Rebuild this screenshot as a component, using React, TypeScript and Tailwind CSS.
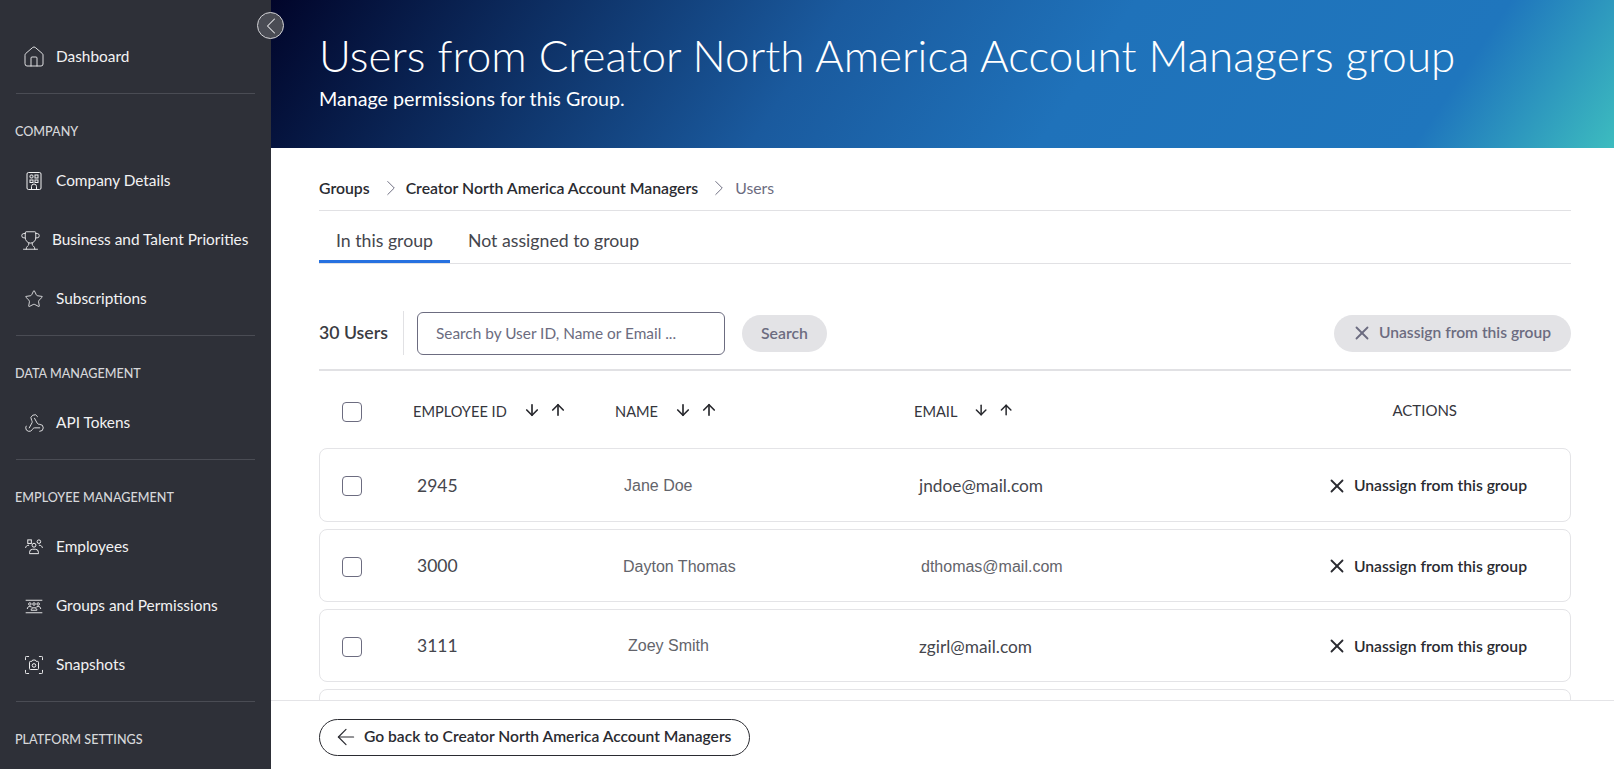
import { ArrowDown, ArrowLeft, ArrowUp, ChevronLeft, ChevronRight, House, Star, Trophy, Webhook, X } from "lucide-react";
import type { ReactNode } from "react";

const BuildingIcon = () => (
  <svg width="18" height="20" viewBox="0 0 18 20" fill="none" stroke="currentColor" strokeWidth="1">
    <rect x="2" y="1.5" width="14" height="17" rx="1.5" />
    <rect x="5" y="4" width="3" height="3" rx="1" />
    <rect x="10" y="4" width="3" height="3" />
    <rect x="5" y="9" width="3" height="2.5" />
    <rect x="10" y="9" width="3" height="2.5" />
    <path d="M6.5 18.5v-3a2.5 2.5 0 0 1 5 0v3" />
  </svg>
);

const EmployeesIcon = () => (
  <svg width="18" height="16" viewBox="0 0 20 18" fill="none" stroke="currentColor" strokeWidth="1.1">
    <rect x="3" y="1" width="4" height="4" />
    <circle cx="15.5" cy="3" r="2" />
    <circle cx="10" cy="7" r="2.2" />
    <path d="M5 16.5v-1.5a3.5 3.5 0 0 1 3.5-3.5h3a3.5 3.5 0 0 1 3.5 3.5v1.5z" />
    <path d="M.5 10c.5-2 1.500-3 4-3M19.500 10c-.5-2-1.500-3-4-3" />
  </svg>
);

const GroupsIcon = () => (
  <svg width="18" height="15" viewBox="0 0 20 18" fill="none" stroke="currentColor" strokeWidth="1.1">
    <path d="M0 1.500h20M0 16.500h20" />
    <circle cx="5" cy="6" r="1.500" />
    <circle cx="10" cy="6" r="1.500" />
    <circle cx="15" cy="6" r="1.500" />
    <path d="M2 12c0-2 1-3 3-3 1.500 0 2.500 .5 3 1.500M18 12c0-2-1-3-3-3-1.500 0-2.500 .5-3 1.500M6.500 13.500c0-2 1.500-3 3.500-3s3.500 1 3.500 3z" />
  </svg>
);

const SnapshotsIcon = () => (
  <svg width="18" height="18" viewBox="0 0 20 20" fill="none" stroke="currentColor" strokeWidth="1.1">
    <path d="M.5 4.500v-3a1 1 0 0 1 1-1h3M15.500 .5h3a1 1 0 0 1 1 1v3M19.500 15.500v3a1 1 0 0 1-1 1h-3M4.500 19.500h-3a1 1 0 0 1-1-1v-3" />
    <path d="M5 7a1 1 0 0 1 1-1h1.500l1-1.500h3l1 1.500H14a1 1 0 0 1 1 1v7a1 1 0 0 1-1 1H6a1 1 0 0 1-1-1z" />
    <circle cx="10" cy="10.500" r="2" />
  </svg>
);

function NavItem({ icon, label, wide }: { icon: ReactNode; label: string; wide?: boolean }) {
  return (
    <div className={`flex h-[59px] items-center pb-px text-[15.4px] text-[#f2f2f3] ${wide ? "pl-[20px]" : "pl-[24px]"}`}>
      <span className="mr-[12px] flex h-5 w-5 shrink-0 items-center justify-center">{icon}</span>
      <span className="whitespace-nowrap">{label}</span>
    </div>
  );
}

function SectionTitle({ children }: { children: ReactNode }) {
  return <div className="h-[58px] pl-[15px] pt-[31px] text-[12.6px] leading-[13px] font-medium text-[#d6d7da]">{children}</div>;
}

const Divider = () => <div className="mx-4 mt-[6px] h-px bg-[#4a4c54]" />;

function SortHeader({ label, className }: { label: string; className: string }) {
  return (
    <div className={`flex items-center ${className}`}>
      <span className="text-[14.6px] leading-none text-[#35363d] uppercase">{label}</span>
      <ArrowDown size={18} strokeWidth={2.2} className="-mt-1 ml-[16px] text-[#26272c]" />
      <ArrowUp size={18} strokeWidth={2.2} className="-mt-1 ml-[8px] text-[#26272c]" />
    </div>
  );
}

const Checkbox = () => <span className="block h-5 w-5 rounded-[4px] border border-[#6c6c80] bg-white" />;

const rows = [
  { id: "2945", name: "Jane Doe", email: "jndoe@mail.com", heightCls: "h-[74px]", nameCls: "", emailCls: "text-[#45464d] [font-family:Lato,sans-serif] text-[17.3px]" },
  { id: "3000", name: "Dayton Thomas", email: "dthomas@mail.com", heightCls: "h-[73px]", nameCls: "-ml-px", emailCls: "ml-[2px] text-[#63646b] [font-family:'Liberation_Sans',sans-serif] text-[16px]" },
  { id: "3111", name: "Zoey Smith", email: "zgirl@mail.com", heightCls: "h-[73px]", nameCls: "ml-1 -mt-px", emailCls: "text-[#45464d] [font-family:Lato,sans-serif] text-[17.3px]" },
];

export default function App() {
  return (
    <div className="relative flex h-screen overflow-hidden bg-white [font-family:Lato,'Open_Sans',sans-serif]">
      {/* SIDEBAR */}
      <aside className="h-full w-[271px] shrink-0 overflow-hidden bg-[#2e3038] pt-[28px]">
        <NavItem icon={<House size={24} strokeWidth={0.9} className="shrink-0" />} label="Dashboard" />
        <Divider />
        <SectionTitle>COMPANY</SectionTitle>
        <NavItem icon={<BuildingIcon />} label="Company Details" />
        <NavItem icon={<Trophy size={21} strokeWidth={1} className="shrink-0" />} label="Business and Talent Priorities" wide />
        <NavItem icon={<Star size={20} strokeWidth={1} className="shrink-0" />} label="Subscriptions" />
        <Divider />
        <SectionTitle>DATA MANAGEMENT</SectionTitle>
        <NavItem icon={<Webhook size={21} strokeWidth={1} className="shrink-0" />} label="API Tokens" />
        <Divider />
        <SectionTitle>EMPLOYEE MANAGEMENT</SectionTitle>
        <NavItem icon={<EmployeesIcon />} label="Employees" />
        <NavItem icon={<GroupsIcon />} label="Groups and Permissions" />
        <NavItem icon={<SnapshotsIcon />} label="Snapshots" />
        <Divider />
        <SectionTitle>PLATFORM SETTINGS</SectionTitle>
      </aside>

      {/* collapse button sits over the sidebar edge */}
      <button className="absolute left-[257px] top-[12px] z-10 flex h-[27px] w-[27px] items-center justify-center rounded-full border border-[#d4d4d8] bg-[#4a4c54] text-[#e8e8ea]">
        <ChevronLeft size={28} strokeWidth={0.9} className="shrink-0" />
      </button>

      <div className="flex min-w-0 flex-1 flex-col">
        {/* HEADER */}
        <header className="h-[148px] shrink-0 bg-[linear-gradient(124deg,#01052a_0%,#1a5a9e_40%,#1f72ba_60%,#1f76bd_86%,#3dbcbf_100%)] pl-[48px] pt-[30px] text-white">
          <h1 className="text-[44px] leading-[50px] font-light whitespace-nowrap">Users from Creator North America Account Managers group</h1>
          <p className="mt-[7px] text-[19.7px] leading-6">Manage permissions for this Group.</p>
        </header>

        {/* CONTENT */}
        <main className="min-h-0 flex-1 overflow-hidden pl-[48px] pr-[43px]">
          <div className="flex h-[63px] items-center border-b border-[#e1e1e4] pt-[18px] text-[15.8px]">
            <span className="font-semibold text-[#2a2b31]">Groups</span>
            <ChevronRight size={26} strokeWidth={0.9} className="ml-[8px] mr-[2px] text-[#6c6c80]" />
            <span className="font-semibold text-[#2a2b31]">Creator North America Account Managers</span>
            <ChevronRight size={26} strokeWidth={0.9} className="ml-[8px] mr-[3px] text-[#6c6c80]" />
            <span className="text-[#6c6c80]">Users</span>
          </div>

          <div className="flex h-[53px] border-b border-[#e1e1e4] text-[17.7px] text-[#45464d]">
            <div className="flex w-[131px] items-center justify-center border-b-[3px] border-[#2671e0] pt-[11px]">In this group</div>
            <div className="flex items-center pl-[18px] pb-[3px] pt-[11px]">Not assigned to group</div>
          </div>

          <div className="flex h-[107px] items-center border-b-2 border-[#e1e1e4] pt-[33px]">
            <span className="w-[84px] text-[17.7px] font-semibold text-[#3a3b42]">30 Users</span>
            <span className="h-[44px] w-px bg-[#e1e1e4]" />
            <input
              placeholder="Search by User ID, Name or Email ..."
              className="ml-[13px] h-[43px] w-[308px] rounded-[6px] border border-[#6c6c80] px-[18px] text-[15.4px] placeholder:text-[#6c6c80]"
            />
            <button className="ml-[17px] h-[37px] w-[85px] rounded-full bg-[#e3e3e6] text-[15.8px] font-semibold text-[#6c6c80]">Search</button>
            <button className="ml-auto flex h-[37px] w-[237px] items-center rounded-full bg-[#e3e3e6] pl-[17px] text-[15.6px] font-semibold text-[#6c6c80]">
              <X size={22} strokeWidth={2} className="mr-[6px] shrink-0" />
              Unassign from this group
            </button>
          </div>

          {/* TABLE HEAD */}
          <div className="flex h-[77px] items-center pl-[23px] pt-[5px]">
            <Checkbox />
            <SortHeader label="Employee ID" className="ml-[51px] w-[202px]" />
            <SortHeader label="Name" className="w-[299px]" />
            <SortHeader label="Email" className="w-[100px]" />
            <span className="-mt-1 ml-auto pr-[114px] text-[15px] leading-none text-[#35363d]">ACTIONS</span>
          </div>

          {/* ROWS */}
          <div className="flex flex-col gap-[7px]">
            {rows.map((r) => (
              <div key={r.id} className={`grid shrink-0 grid-cols-[75px_207px_295px_1fr] items-center rounded-[8px] border border-[#e4e4e7] pl-[22px] pr-[43px] pt-[2px] ${r.heightCls}`}>
                <Checkbox />
                <span className="text-[17.5px] text-[#45464d]">{r.id}</span>
                <span className={`text-[16px] text-[#63646b] [font-family:'Liberation_Sans',sans-serif] ${r.nameCls}`}>{r.name}</span>
                <div className="flex items-center justify-between">
                  <span className={r.emailCls}>{r.email}</span>
                  <span className="flex items-center text-[15.7px] font-semibold text-[#2a2b31]">
                    <X size={22} strokeWidth={2} className="mr-[6px] shrink-0" />
                    Unassign from this group
                  </span>
                </div>
              </div>
            ))}
            <div className="h-[74px] shrink-0 rounded-[8px] border border-[#e4e4e7]" />
          </div>
        </main>

        {/* FOOTER */}
        <footer className="flex h-[69px] shrink-0 items-center border-t border-[#e4e4e7] pl-[48px] pt-1">
          <button className="flex h-[37px] w-[431px] items-center rounded-full border border-[#2a2b31] pl-[13px] text-[15.6px] font-semibold text-[#2a2b31]">
            <ArrowLeft size={26} strokeWidth={1.1} className="mr-[5px] shrink-0" />
            Go back to Creator North America Account Managers
          </button>
        </footer>
      </div>
    </div>
  );
}
